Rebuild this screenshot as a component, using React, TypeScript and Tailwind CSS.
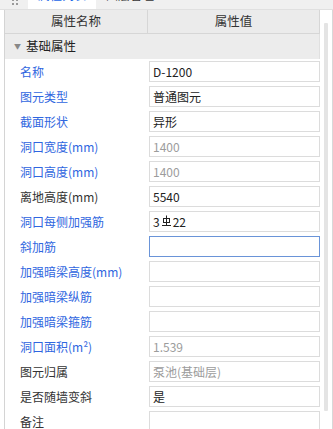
import React from "react";

type Row = { label: string; blue: boolean; value?: React.ReactNode; gray?: boolean; focus?: boolean };

const Rebar = () => (
  <svg width="11" height="12" viewBox="0 0 11 12" className="inline-block mx-[1px] -mt-[2px]" fill="none" stroke="#222" strokeWidth="1">
    <line x1="5.5" y1="0.5" x2="5.5" y2="10.5" />
    <rect x="2.5" y="3.5" width="6" height="4" />
    <line x1="1" y1="10.5" x2="10" y2="10.5" />
  </svg>
);

const rows: Row[] = [
  { label: "名称", blue: true, value: "D-1200" },
  { label: "图元类型", blue: true, value: "普通图元" },
  { label: "截面形状", blue: true, value: "异形" },
  { label: "洞口宽度(mm)", blue: true, value: "1400", gray: true },
  { label: "洞口高度(mm)", blue: true, value: "1400", gray: true },
  { label: "离地高度(mm)", blue: false, value: "5540" },
  { label: "洞口每侧加强筋", blue: true, value: (<span className="inline-flex items-center">3<Rebar />22</span>) },
  { label: "斜加筋", blue: true, focus: true },
  { label: "加强暗梁高度(mm)", blue: true },
  { label: "加强暗梁纵筋", blue: true },
  { label: "加强暗梁箍筋", blue: true },
  { label: "洞口面积(m²)", blue: true, value: "1.539", gray: true },
  { label: "图元归属", blue: false, value: "泵池(基础层)", gray: true },
  { label: "是否随墙变斜", blue: false, value: "是" },
  { label: "备注", blue: false },
];

export default function App() {
  return (
    <div
      className="w-[333px] h-[429px] overflow-hidden bg-white flex flex-col text-[12px]"
      style={{ fontFamily: '"Noto Sans CJK SC", "Noto Sans", sans-serif' }}
    >
      {/* tab strip */}
      <div className="h-[10px] shrink-0 bg-[#f0f0f0] flex overflow-hidden border-b border-[#e0e0e0]">
        <div className="w-[28px] flex justify-center">
          <div className="grid grid-cols-2 gap-[2px] mt-[-1px] h-[6px] ml-[1px]">
            <div className="w-[2px] h-[2px] bg-[#9a9a9a]" />
            <div className="w-[2px] h-[2px] bg-[#9a9a9a]" />
            <div className="w-[2px] h-[2px] bg-[#9a9a9a]" />
            <div className="w-[2px] h-[2px] bg-[#9a9a9a]" />
          </div>
        </div>
        <div className="w-[68px] bg-white flex justify-center">
          <span className="text-[#1a66e8] leading-[14px] mt-[-12px]">属性列表</span>
        </div>
        <div className="pl-[10px]">
          <span className="text-[#333] leading-[14px] mt-[-12px] block">图层管理</span>
        </div>
      </div>

      <div className="flex flex-1 min-h-0">
        <div className="w-[4px] shrink-0" />
        <div className="w-[316px] shrink-0 border-l border-[#d4d4d4] flex flex-col">
          {/* header */}
          <div className="h-[24px] shrink-0 bg-[#ebebeb] border-b border-r border-[#d6d6d6] flex text-[#333] text-[12.5px]">
            <div className="w-[143px] border-r border-[#d6d6d6] flex items-center justify-center">属性名称</div>
            <div className="flex-1 flex items-center justify-center">属性值</div>
          </div>
          {/* group */}
          <div className="h-[25px] shrink-0 bg-[#ececec] border-r border-[#e0e0e0] flex items-center text-[#222] text-[12.5px]">
            <span className="w-[21px] pl-[9px] text-[#888] text-[7px] leading-none">▼</span>
            <span>基础属性</span>
          </div>
          {/* rows */}
          <div className="flex flex-col">
            {rows.map((r, i) => (
              <div key={i} className="h-[25px] shrink-0 flex items-center">
                <div className={`w-[143px] pl-[15px] whitespace-nowrap ${r.blue ? "text-[#2f66e0]" : "text-[#333]"}`}>
                  {r.label}
                </div>
                <div
                  className={`ml-[1px] w-[171px] h-[21px] border flex items-center pl-[3px] whitespace-nowrap ${
                    r.focus ? "border-[#6a94d8]" : "border-[#dcdcdc]"
                  } ${r.gray ? "text-[#9c9c9c]" : "text-[#222]"}`}
                >
                  {r.value}
                </div>
              </div>
            ))}
          </div>
        </div>
        {/* scrollbar column */}
        <div className="flex-1 flex border-r border-[#d8d8d8]">
          <div className="ml-[4px] mt-[13px] w-[4px] h-[388px] bg-[#e4e4e4] rounded-[1px]" />
        </div>
      </div>
    </div>
  );
}
